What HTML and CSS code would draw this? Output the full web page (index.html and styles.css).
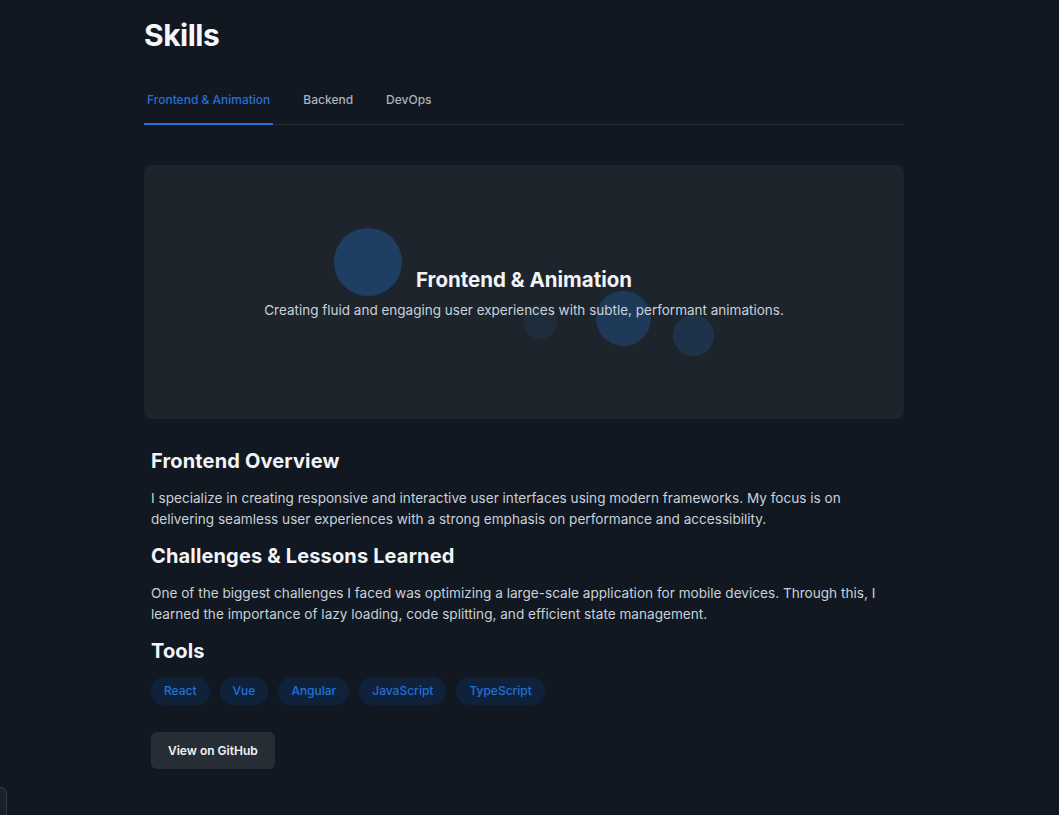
FILE: index.html
```html
<!DOCTYPE html>
<html lang="en">
<head>
<meta charset="utf-8">
<title>Skills</title>
<link rel="stylesheet" href="styles.css">
</head>
<body>
<main class="page">
  <h1 class="title">Skills</h1>
  <nav class="tabs">
    <a class="tab active">Frontend &amp; Animation</a>
    <a class="tab">Backend</a>
    <a class="tab">DevOps</a>
  </nav>
  <section class="hero">
    <span class="bubble b1"></span>
    <span class="bubble b2"></span>
    <span class="bubble b3"></span>
    <span class="bubble b4"></span>
    <div class="hero-text">
      <h2 class="hero-title">Frontend &amp; Animation</h2>
      <p class="hero-sub">Creating fluid and engaging user experiences with subtle, performant animations.</p>
    </div>
  </section>
  <section class="details">
    <h3 class="heading">Frontend Overview</h3>
    <p class="text">I specialize in creating responsive and interactive user interfaces using modern frameworks. My focus is on delivering seamless user experiences with a strong emphasis on performance and accessibility.</p>
    <h3 class="heading">Challenges &amp; Lessons Learned</h3>
    <p class="text">One of the biggest challenges I faced was optimizing a large-scale application for mobile devices. Through this, I learned the importance of lazy loading, code splitting, and efficient state management.</p>
    <h3 class="heading">Tools</h3>
    <ul class="pills">
      <li class="pill">React</li>
      <li class="pill">Vue</li>
      <li class="pill">Angular</li>
      <li class="pill">JavaScript</li>
      <li class="pill">TypeScript</li>
    </ul>
    <a class="btn">View on GitHub</a>
  </section>
</main>
<div class="corner"></div>
</body>
</html>
```
FILE: styles.css
```css
* { box-sizing: border-box; }
html, body { margin: 0; padding: 0; }
body {
  background: #111821;
  color: #e6edf3;
  font-family: Inter, "Liberation Sans", Arial, sans-serif;
  height: 815px;
  overflow: hidden;
}
.page {
  width: 760px;
  margin: 0 0 0 144px;
  padding-top: 17px;
}
.title {
  margin: 0;
  font-size: 30px;
  font-weight: 700;
  line-height: 36px;
  letter-spacing: -0.5px;
  color: #f5f7fa;
}
.tabs {
  display: flex;
  gap: 27px;
  margin-top: 33px;
  border-bottom: 1px solid #232a33;
}
.tab {
  font-size: 12px;
  font-weight: 500;
  line-height: 15px;
  color: #aab2bd;
  padding: 6px 3px 16px 3px;
  margin-bottom: -1px;
  border-bottom: 2px solid transparent;
}
.tab.active {
  color: #2171d9;
  border-bottom-color: #2171d9;
}
.hero {
  position: relative;
  margin-top: 40px;
  height: 254px;
  background: #1e242c;
  border-radius: 8px;
  display: flex;
  align-items: center;
  justify-content: center;
  overflow: hidden;
}
.bubble {
  position: absolute;
  border-radius: 50%;
  background: #1e4a78;
}
.b1 { left: 190px; top: 63px; width: 68px; height: 68px; opacity: 0.72; }
.b2 { left: 379px; top: 140px; width: 34px; height: 34px; opacity: 0.22; }
.b3 { left: 452px; top: 126px; width: 55px; height: 55px; opacity: 0.58; }
.b4 { left: 529px; top: 150px; width: 41px; height: 41px; opacity: 0.4; }
.hero-text { position: relative; text-align: center; margin-top: 2px; }
.hero-title {
  margin: 0;
  font-size: 20.5px;
  font-weight: 700;
  color: #f2f4f7;
  line-height: 24px;
}
.hero-sub {
  margin: 10px 0 0;
  font-size: 13.5px;
  color: #c9d1d9;
  line-height: 16px;
}
.details { padding: 28px 7px 0; }
.heading {
  margin: 0;
  font-size: 20px;
  font-weight: 700;
  line-height: 28px;
  letter-spacing: 0.15px;
  color: #f2f4f7;
}
.text {
  margin: 13px 0 12px;
  font-size: 13.6px;
  line-height: 21px;
  color: #c9d1d9;
}
.pills {
  list-style: none;
  margin: 12px 0 0;
  padding: 0;
  display: flex;
  gap: 10px;
}
.pill {
  background: #10223a;
  color: #2171d9;
  font-size: 12px;
  font-weight: 500;
  height: 28px;
  line-height: 28px;
  padding: 0 13px;
  border-radius: 14px;
}
.btn {
  display: inline-block;
  margin-top: 27px;
  background: #272d35;
  color: #f2f4f7;
  font-size: 12px;
  font-weight: 600;
  padding: 0 17px;
  height: 37px;
  line-height: 37px;
  border-radius: 6px;
}
.corner {
  position: fixed;
  left: -10px;
  top: 787px;
  width: 17px;
  height: 40px;
  background: #1b2028;
  border: 1px solid #343a43;
  border-radius: 6px;
}
```
